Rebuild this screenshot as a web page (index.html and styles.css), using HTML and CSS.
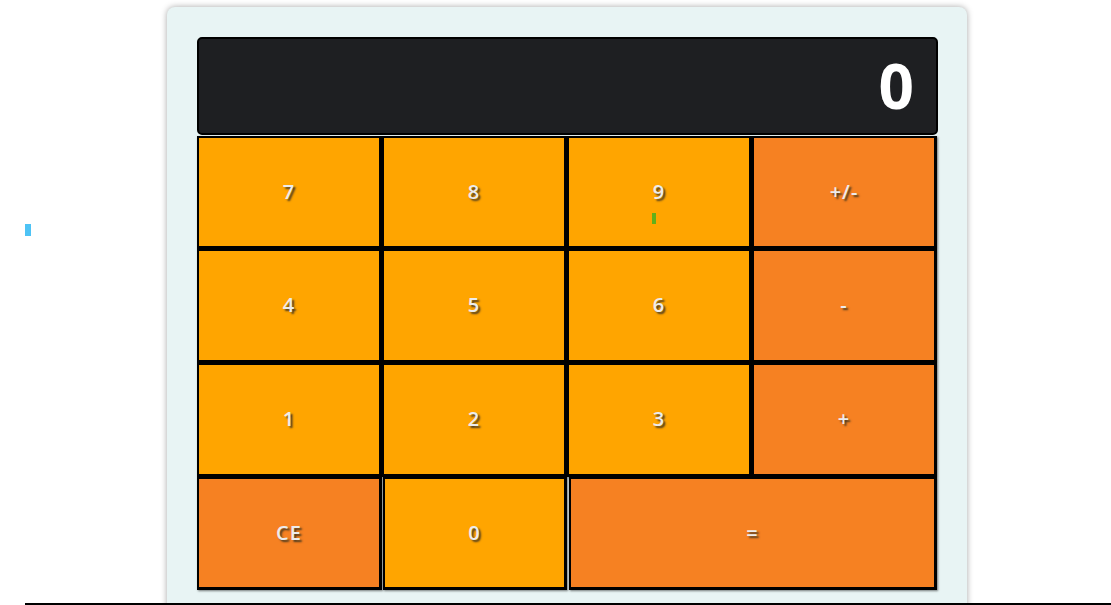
FILE: index.html
```html
<!DOCTYPE html>
<html>
<head>
<meta charset="utf-8">
<link rel="stylesheet" href="styles.css">
</head>
<body>
<div class="marker-blue"></div>
<div class="calc">
  <div class="display">0</div>
  <div class="keys">
    <button class="key">7</button>
    <button class="key">8</button>
    <button class="key key-9">9<span class="marker-green"></span></button>
    <button class="key op">+/-</button>
    <button class="key">4</button>
    <button class="key">5</button>
    <button class="key">6</button>
    <button class="key op">-</button>
    <button class="key">1</button>
    <button class="key">2</button>
    <button class="key">3</button>
    <button class="key op">+</button>
    <button class="key op">CE</button>
    <button class="key shift">0</button>
    <button class="key op wide shift2">=</button>
  </div>
</div>
<div class="bottom-line"></div>
</body>
</html>
```

FILE: styles.css
```css
html, body {
  margin: 0;
  padding: 0;
  background: #ffffff;
  overflow: hidden;
  height: 605px;
}

body {
  position: relative;
  font-family: "Open Sans", sans-serif;
}

.calc {
  box-sizing: border-box;
  width: 800px;
  margin: 7px 0 0 167px;
  padding: 30px;
  background: #e8f4f4;
  border-radius: 8px;
  box-shadow: 0 0 6px rgba(0, 0, 0, 0.35);
}

.display {
  box-sizing: border-box;
  width: 741px;
  height: 98px;
  background: #1e1f22;
  border: 2px solid #000;
  border-radius: 5px;
  color: #ffffff;
  font-family: "Open Sans", sans-serif;
  font-weight: 700;
  font-size: 62px;
  display: flex;
  align-items: center;
  justify-content: flex-end;
  padding-right: 22px;
  padding-bottom: 2px;
}

.keys {
  display: grid;
  grid-template-columns: repeat(4, 185px);
  grid-template-rows: 113px 114px 114px 113px;
  margin-top: 1px;
}

.key {
  position: relative;
  box-sizing: border-box;
  margin: 0;
  border: 2px solid #000;
  border-right-width: 3px;
  border-bottom-width: 3px;
  border-radius: 0;
  background: #ffa500;
  color: #ececec;
  font-family: "Open Sans", sans-serif;
  font-size: 20px;
  font-weight: 600;
  letter-spacing: 1px;
  text-shadow: 2px 2px 2px #4a3a20;
  box-shadow: 1px 1px 2px rgba(0, 0, 0, 0.5);
  padding: 0 0 2px 0;
  cursor: pointer;
}

.key.op {
  background: #f68122;
}

.key.wide {
  grid-column: span 2;
}

.key.shift {
  margin-left: 1px;
}

.key.shift2 {
  margin-left: 2px;
}

.marker-green {
  position: absolute;
  left: 83px;
  top: 75px;
  width: 4px;
  height: 11px;
  background: #62b01a;
}

.marker-blue {
  position: absolute;
  left: 25px;
  top: 224px;
  width: 6px;
  height: 12px;
  background: #4ec3f5;
}

.bottom-line {
  position: absolute;
  left: 25px;
  right: 0;
  top: 603px;
  height: 2px;
  background: #000;
}
```
